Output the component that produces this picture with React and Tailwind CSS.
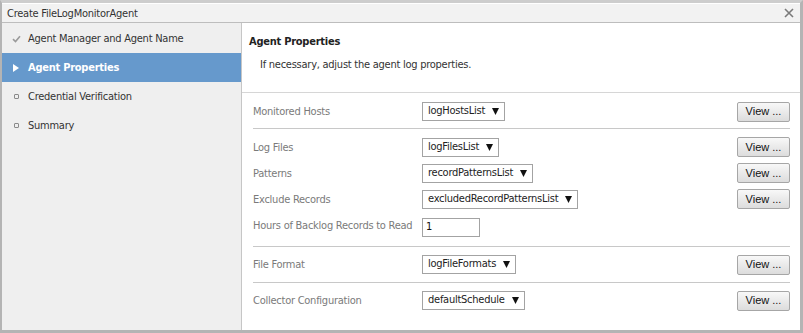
import React from "react";

function Arrow() {
  return (
    <svg width="7" height="7" viewBox="0 0 7 7" className="ml-[7px] shrink-0">
      <polygon points="0,0 7,0 3.5,7" fill="#111" />
    </svg>
  );
}

function Select({ value }) {
  return (
    <div className="flex items-center h-[19px] border border-[#a3a3a3] bg-white pl-[5px] pr-[5px] text-[11px] text-[#222]">
      <span className="leading-none relative top-[-1px]">{value}</span>
      <Arrow />
    </div>
  );
}

function ViewBtn() {
  return (
    <button className="w-[53px] h-[20px] border border-[#a6a6a6] rounded-[2px] bg-gradient-to-b from-[#f8f8f8] to-[#dcdcdc] text-[11px] tracking-normal text-[#111] flex items-center justify-center font-['Liberation_Sans',Arial,sans-serif]">
      View ...
    </button>
  );
}

function Row({ label, children, view = true, h = "h-[26px]" }) {
  return (
    <div className={`flex items-center ${h}`}>
      <div className="w-[169px] shrink-0 text-[11px] text-[#7a7a7a] relative top-[1px]">{label}</div>
      <div className="flex-1 flex items-center">{children}</div>
      {view && <ViewBtn />}
    </div>
  );
}

function NavItem({ icon, label, active }) {
  return (
    <div className={`flex items-center h-[29px] ${active ? "bg-[#6699cc] text-white font-bold" : "text-[#333]"}`}>
      <div className="w-[26px] flex justify-center pl-[2px]">{icon}</div>
      <span className="text-[11px] relative top-[1px]">{label}</span>
    </div>
  );
}

export default function App() {
  return (
    <div className="w-[803px] h-[333px] bg-white border-t-[3px] border-t-[#cdcdcd] border-l-2 border-r-[3px] border-b-[3px] border-[#b4b4b4] flex flex-col overflow-hidden font-['DejaVu_Sans_Condensed','DejaVu_Sans',sans-serif] tracking-[-0.25px]">
      <div className="h-[20px] shrink-0 border-t border-white bg-[#f2f2f2] border-b border-b-[#bdbdbd] flex items-center justify-between pl-[5px] pr-[6px]">
        <span className="text-[11px] text-[#333] relative top-[1px]">Create FileLogMonitorAgent</span>
        <svg width="10" height="10" viewBox="0 0 10 10">
          <path d="M1 1 L9 9 M9 1 L1 9" stroke="#7a7a7a" strokeWidth="1.6" />
        </svg>
      </div>
      <div className="flex flex-1 min-h-0">
        <div className="w-[240px] shrink-0 bg-[#efefef] border-r border-[#c6c6c6] pt-[1px]">
          <NavItem
            label="Agent Manager and Agent Name"
            icon={
              <svg width="9" height="8" viewBox="0 0 9 8">
                <path d="M1 4.2 L3.5 6.6 L8 1.2" stroke="#9a9a9a" strokeWidth="1.6" fill="none" />
              </svg>
            }
          />
          <NavItem
            active
            label="Agent Properties"
            icon={
              <svg width="6" height="8" viewBox="0 0 6 8">
                <polygon points="0,0 6,4 0,8" fill="#fff" />
              </svg>
            }
          />
          <NavItem
            label="Credential Verification"
            icon={<div className="w-[5px] h-[5px] border border-[#8a8a8a] rounded-[1px]" />}
          />
          <NavItem
            label="Summary"
            icon={<div className="w-[5px] h-[5px] border border-[#8a8a8a] rounded-[1px]" />}
          />
        </div>
        <div className="flex-1 flex flex-col bg-white">
          <div className="h-[70px] shrink-0 border-b border-[#d6d6d6] pl-[7px] pt-[12px]">
            <div className="text-[11px] font-bold text-[#222] leading-[14px]">Agent Properties</div>
            <div className="text-[11px] text-[#333] leading-[14px] mt-[9px] pl-[11px]">If necessary, adjust the agent log properties.</div>
          </div>
          <div className="pl-[11px] pr-[10px]">
            <div className="h-[35px] flex flex-col justify-center pt-[2px]">
              <Row label="Monitored Hosts"><Select value="logHostsList" /></Row>
            </div>
            <div className="border-t border-[#c8c8c8] pt-[5px] pb-[8px]">
              <Row label="Log Files"><Select value="logFilesList" /></Row>
              <Row label="Patterns"><Select value="recordPatternsList" /></Row>
              <Row label="Exclude Records"><Select value="excludedRecordPatternsList" /></Row>
              <Row label={<span>Hours of Backlog Records to Read</span>} view={false}>
                <div className="w-[58px] h-[19px] border border-[#a3a3a3] bg-white flex items-center pl-[3px] text-[11px] text-[#111] relative top-[2px]">1</div>
              </Row>
            </div>
            <div className="border-t border-[#c8c8c8] h-[36px] flex flex-col justify-center">
              <Row label="File Format"><Select value="logFileFormats" /></Row>
            </div>
            <div className="border-t border-[#c8c8c8] h-[36px] flex flex-col justify-center">
              <Row label="Collector Configuration"><Select value="defaultSchedule" /></Row>
            </div>
          </div>
        </div>
      </div>
    </div>
  );
}
